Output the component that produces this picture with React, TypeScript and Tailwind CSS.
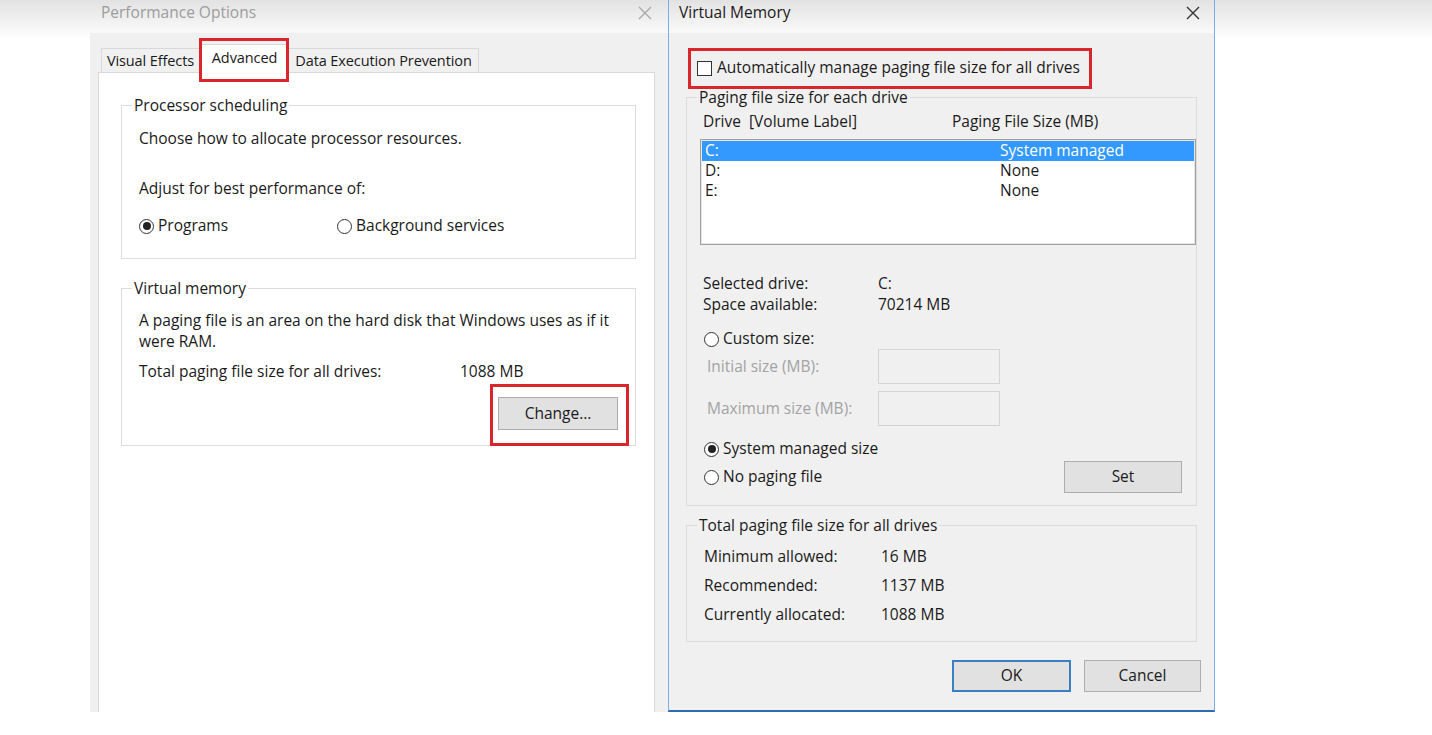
import React from "react";

// Two Windows dialogs side by side: Performance Options + Virtual Memory

function CloseX({ color }: { color: string }) {
  return (
    <svg width="16" height="16" viewBox="0 0 16 16" className="block mt-[3px]">
      <path d="M2 2L14 14M14 2L2 14" stroke={color} strokeWidth="1.4" fill="none" />
    </svg>
  );
}

function Radio({ checked, label }: { checked?: boolean; label: string }) {
  return (
    <div className="flex items-center h-[20px]">
      <span className="w-[15px] h-[15px] rounded-full border border-[#333] bg-white flex items-center justify-center shrink-0">
        {checked && <span className="w-[8px] h-[8px] rounded-full bg-[#222]" />}
      </span>
      <span className="ml-[4px]">{label}</span>
    </div>
  );
}

function Group({
  title,
  className = "",
  children,
}: {
  title: string;
  className?: string;
  children: React.ReactNode;
}) {
  return (
    <fieldset className={`border border-[#dcdcdc] ${className}`}>
      <legend className="ml-[10px] px-[2px] leading-[18px]">{title}</legend>
      {children}
    </fieldset>
  );
}

function Button({ label, primary, className = "" }: { label: string; primary?: boolean; className?: string }) {
  return (
    <div
      className={`flex items-center justify-center bg-[#e1e1e1] ${
        primary ? "border-2 border-[#3a7fc4]" : "border border-[#adadad]"
      } ${className}`}
    >
      {label}
    </div>
  );
}

function RedBox({ className }: { className: string }) {
  return <span className={`absolute border-[3px] border-[#d9262c] pointer-events-none ${className}`} />;
}

function PerformanceOptions() {
  return (
    <div className="w-[578px] h-[712px] flex flex-col shrink-0">
      <div className="h-[33px] flex items-start justify-between pl-[11px] pr-[15px] pt-[2px] text-[#9c9c9c]">
        <span className="leading-[20px]">Performance Options</span>
        <CloseX color="#a8a8a8" />
      </div>
      <div className="flex-1 flex flex-col bg-[#f0f0f0] pl-[8px] pr-[13px] pt-[11px]">
        <div className="flex items-end h-[28px] pl-[3px] text-[14.5px] tracking-[-0.1px]">
          <div className="h-[24px] w-[99px] border border-[#d9d9d9] border-b-0 bg-[#f0f0f0] flex items-center justify-center">
            Visual Effects
          </div>
          <div className="relative z-10 -mb-px h-[29px] w-[89px] border border-[#d9d9d9] border-b-0 bg-white flex items-start pt-[2px] justify-center">
            Advanced
            <RedBox className="-left-[2px] -right-[1px] -top-[7px] -bottom-[9px]" />
          </div>
          <div className="h-[24px] w-[190px] border border-[#d9d9d9] border-b-0 border-l-0 bg-[#f0f0f0] flex items-center justify-center">
            Data Execution Prevention
          </div>
        </div>
        <div className="flex-1 bg-white border border-[#d9d9d9] border-b-0 flex flex-col">
          <Group title="Processor scheduling" className="mt-[23px] ml-[22px] mr-[18px]">
            <div className="pl-[17px] pt-[14px] pb-[22px]">
              <div className="leading-[20px]">Choose how to allocate processor resources.</div>
              <div className="leading-[20px] mt-[30px]">Adjust for best performance of:</div>
              <div className="flex mt-[18px]">
                <div className="w-[198px]">
                  <Radio checked label="Programs" />
                </div>
                <Radio label="Background services" />
              </div>
            </div>
          </Group>
          <Group title="Virtual memory" className="mt-[20px] ml-[22px] mr-[18px]">
            <div className="pl-[17px] pr-[12px] pt-[13px] pb-[15px]">
              <div className="leading-[21px] whitespace-nowrap">
                A paging file is an area on the hard disk that Windows uses as if it
                <br />
                were RAM.
              </div>
              <div className="flex leading-[20px] mt-[9px]">
                <span className="w-[321px]">Total paging file size for all drives:</span>
                <span>1088 MB</span>
              </div>
              <div className="flex justify-end mt-[16px] pr-[5px]">
                <div className="relative">
                  <Button label="Change..." className="w-[120px] h-[33px]" />
                  <RedBox className="-left-[8px] -right-[11px] -top-[13px] -bottom-[16px]" />
                </div>
              </div>
            </div>
          </Group>
        </div>
      </div>
    </div>
  );
}

const drives = [
  { d: "C:", size: "System managed", selected: true },
  { d: "D:", size: "None" },
  { d: "E:", size: "None" },
];

function VirtualMemory() {
  return (
    <div className="w-[547px] h-[712px] flex flex-col shrink-0 border-l border-r border-[#79aee0] border-b-2 border-b-[#2f6db3]">
      <div className="h-[33px] flex items-start justify-between pl-[10px] pr-[13px] pt-[2px] text-[#1a1a1a]">
        <span className="leading-[20px]">Virtual Memory</span>
        <CloseX color="#333" />
      </div>
      <div className="flex-1 flex flex-col bg-[#f0f0f0] text-[#1a1a1a]">
        <div className="pl-[28px] pt-[25px]">
          <div className="relative w-fit flex items-center h-[20px]">
            <span className="w-[15px] h-[15px] border border-[#333] bg-white shrink-0" />
            <span className="ml-[5px]">Automatically manage paging file size for all drives</span>
            <RedBox className="-left-[9px] -right-[12px] -top-[10px] -bottom-[11px]" />
          </div>
        </div>

        <Group title="Paging file size for each drive" className="mt-[10px] ml-[17px] mr-[17px]">
          <div className="pl-[13px] pb-[12px]">
            <div className="flex leading-[20px] mt-[5px] pl-[3px]">
              <span className="w-[249px]">Drive&nbsp; [Volume Label]</span>
              <span>Paging File Size (MB)</span>
            </div>
            <div className="mt-[8px] h-[106px] bg-white border border-[#a0a0a0] p-[1px] shadow-[inset_0_0_0_1px_#e6e6e6]">
              {drives.map((r) => (
                <div
                  key={r.d}
                  className={`flex h-[20px] items-center pl-[3px] ${r.selected ? "bg-[#3399ff] text-white" : ""}`}
                >
                  <span className="w-[295px]">{r.d}</span>
                  <span>{r.size}</span>
                </div>
              ))}
            </div>
            <div className="pl-[3px] mt-[28px]">
              <div className="flex leading-[21px]">
                <span className="w-[175px]">Selected drive:</span>
                <span>C:</span>
              </div>
              <div className="flex leading-[21px]">
                <span className="w-[175px]">Space available:</span>
                <span>70214 MB</span>
              </div>
            </div>
            <div className="pl-[4px] mt-[14px]">
              <Radio label="Custom size:" />
            </div>
            <div className="pl-[7px] text-[#a3a3a3]">
              <div className="flex items-center">
                <span className="w-[171px]">Initial size (MB):</span>
                <span className="w-[122px] h-[35px] border border-[#d4d4d4] bg-[#f0f0f0]" />
              </div>
              <div className="flex items-center mt-[7px]">
                <span className="w-[171px]">Maximum size (MB):</span>
                <span className="w-[122px] h-[35px] border border-[#d4d4d4] bg-[#f0f0f0]" />
              </div>
            </div>
            <div className="pl-[4px] mt-[13px]">
              <Radio checked label="System managed size" />
            </div>
            <div className="flex items-center justify-between pl-[4px] pr-[14px] mt-[2px]">
              <Radio label="No paging file" />
              <Button label="Set" className="w-[118px] h-[32px]" />
            </div>
          </div>
        </Group>

        <Group title="Total paging file size for all drives" className="mt-[10px] ml-[17px] mr-[17px]">
          <div className="pl-[17px] pt-[12px] pb-[17px] flex flex-col gap-[9px]">
            {[
              ["Minimum allowed:", "16 MB"],
              ["Recommended:", "1137 MB"],
              ["Currently allocated:", "1088 MB"],
            ].map(([k, v]) => (
              <div key={k} className="flex leading-[20px]">
                <span className="w-[177px]">{k}</span>
                <span>{v}</span>
              </div>
            ))}
          </div>
        </Group>

        <div className="flex justify-end gap-[13px] pr-[13px] mt-[18px]">
          <Button primary label="OK" className="w-[119px] h-[32px]" />
          <Button label="Cancel" className="w-[117px] h-[32px]" />
        </div>
      </div>
    </div>
  );
}

export default function App() {
  return (
    <div className="w-[1432px] h-[735px] overflow-hidden flex items-start pl-[90px] bg-[linear-gradient(to_bottom,#e2e2e2,#ffffff_40px)] font-['Open_Sans','Noto_Sans',sans-serif] text-[15.5px] text-[#1a1a1a]">
      <PerformanceOptions />
      <VirtualMemory />
    </div>
  );
}
